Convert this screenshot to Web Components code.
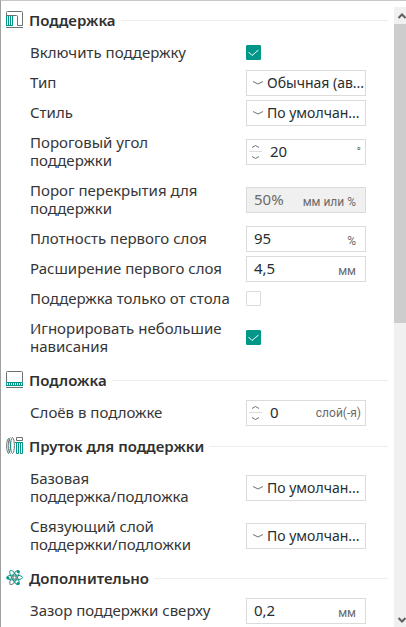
<!DOCTYPE html>
<html lang="ru">

<head>
	<meta charset="UTF-8">
	<meta name="viewport" content="width=device-width, initial-scale=1.0">
	<title>Поддержка</title>
	<style>
		html,
		body {
			height: 100%;
			margin: 0;
		}

		body {
			font: 15px/18px "Noto Sans", "Open Sans", sans-serif;
			color: #363636;
			background: #fff;
			--accent: #009688;
			--line: #dbdbdb;
		}
	</style>
</head>

<body>
	<settings-panel>
		<settings-group name="Поддержка">
			<svg slot="icon" width="18" height="18" viewBox="0 0 18 18" fill="none">
				<path d="M.5 5V1.500Q.5.500 1.500.500H15.500Q16.500.500 16.500 1.500V14.500H11.500V5.500Q11.500 4.500 10.500 4.500H.5M0 16.500H17" stroke="#6b7273" />
				<path d="M.5 5V14.500M2.500 5V14.500M4.500 5V14.500M6.500 5V14.500M0 14.500H7" stroke="#009688" />
			</svg>
			<check-row checked>Включить поддержку</check-row>
			<select-row value="Обычная (ав...">Тип</select-row>
			<select-row value="По умолчан...">Стиль</select-row>
			<number-row value="20" unit="°" spin>Пороговый угол<br>поддержки</number-row>
			<number-row value="50%" unit="мм или %" disabled>Порог перекрытия для<br>поддержки</number-row>
			<number-row value="95" unit="%">Плотность первого слоя</number-row>
			<number-row value="4,5" unit="мм">Расширение первого слоя</number-row>
			<check-row>Поддержка только от стола</check-row>
			<check-row checked>Игнорировать небольшие<br>нависания</check-row>
		</settings-group>
		<settings-group name="Подложка">
			<svg slot="icon" width="18" height="18" viewBox="0 0 18 18" fill="none">
				<path d="M.5 11V1.500Q.5.500 1.500.500H15.500Q16.500.500 16.500 1.500V11M0 16.500H17" stroke="#6b7273" />
				<path d="M.5 14V11.500H16.500V14M0 14.500H17M2.500 12V14M4.500 12V14M6.500 12V14M8.500 12V14M10.500 12V14M12.500 12V14M14.500 12V14" stroke="#009688" />
			</svg>
			<number-row value="0" unit="слой(-я)" spin>Слоёв в подложке</number-row>
		</settings-group>
		<settings-group name="Пруток для поддержки">
			<svg slot="icon" width="18" height="18" viewBox="0 0 18 18" fill="none">
				<path d="M2.500 1.500C0 3 0 14.500 2.500 16.500M4.500.500C1.500 2 1.500 15.500 4.500 16.500M6.500.500C9 2 9 15.500 6.500 16.500C4 15.500 4 2 6.500.500M10.500.500H16.500V3.500H10.500Z" stroke="#6b7273" />
				<path d="M2.500 1.500C5 4 5 14 2.500 16.500M9 5.500H17M10.500 5.500V16.500H12.500V5.500M14.500 5.500V16.500H16.500V5.500" stroke="#009688" />
			</svg>
			<select-row value="По умолчан...">Базовая<br>поддержка/подложка</select-row>
			<select-row value="По умолчан...">Связующий слой<br>поддержки/подложки</select-row>
		</settings-group>
		<settings-group name="Дополнительно">
			<svg slot="icon" width="18" height="18" viewBox="0 0 18 18" fill="none">
				<ellipse cx="8.500" cy="8.500" rx="8" ry="2.500" transform="rotate(-60 8.500 8.500)" stroke="#6b7273" />
				<ellipse cx="8.500" cy="8.500" rx="8" ry="2.500" transform="rotate(60 8.500 8.500)" stroke="#009688" />
				<ellipse cx="8.500" cy="8.500" rx="8" ry="2.500" stroke="#009688" />
				<circle cx="8.500" cy="8.500" r="1.500" fill="#fff" stroke="#6b7273" />
				<circle cx="2" cy="9" r="1.500" fill="#009688" />
				<circle cx="12" cy="2.500" r="1.500" fill="#009688" />
				<circle cx="12" cy="14.500" r="1.500" fill="#009688" />
			</svg>
			<number-row value="0,2" unit="мм">Зазор поддержки сверху</number-row>
		</settings-group>
	</settings-panel>

	<template id="panel">
		<style>
			:host {
				display: flex;
				box-sizing: border-box;
				height: 100%;
				overflow: hidden;
				border-top: 1px solid #c8c8c8;
				border-left: 1px solid #a0a0a0;
			}

			main {
				flex: 1;
				min-width: 0;
				padding: 1px 6px 0 5px;
			}
		</style>
		<main>
			<slot></slot>
		</main>
		<scroll-track></scroll-track>
	</template>

	<template id="track">
		<style>
			:host {
				display: flex;
				flex-direction: column;
				width: 12px;
				margin-top: 6px;
				overflow: hidden;
				background: #f0f0f0;
			}

			button {
				display: block;
				width: 17px;
				height: 17px;
				padding: 0;
				border: 0;
				background: none;
			}

			svg {
				display: block;
			}

			.rail {
				flex: 1;
			}

			.thumb {
				height: 51%;
				background: #cdcdcd;
			}
		</style>
		<button type="button" aria-label="Вверх">
			<svg width="17" height="17" fill="none" stroke="#606060" stroke-width="2">
				<path d="M4.500 11L8 7.500L11.500 11" />
			</svg>
		</button>
		<div class="rail">
			<div class="thumb"></div>
		</div>
		<button type="button" aria-label="Вниз">
			<svg width="17" height="17" fill="none" stroke="#606060" stroke-width="2">
				<path d="M4.500 8L8 11.500L11.500 8" />
			</svg>
		</button>
	</template>

	<template id="group">
		<style>
			:host {
				display: block;
			}

			header {
				display: flex;
				align-items: center;
				height: 36px;
				gap: 5px;
			}

			::slotted(svg) {
				flex: none;
			}

			h2 {
				margin: 0;
				font-size: 15px;
				font-weight: 600;
				color: #303030;
			}

			.rule {
				flex: 1;
				height: 1px;
				background: #eee;
			}
		</style>
		<header>
			<slot name="icon"></slot>
			<h2></h2>
			<div class="rule"></div>
		</header>
		<slot></slot>
	</template>

	<template id="row">
		<style>
			:host {
				display: flex;
				align-items: center;
				gap: 16px;
				padding: 2px 22px 2px 24px;
			}

			label {
				flex: 1;
				padding: 3px 0 5px;
				white-space: nowrap;
			}

			.control {
				display: flex;
				align-items: center;
				box-sizing: border-box;
				width: 120px;
				height: 26px;
			}

			.box {
				border: 1px solid var(--line);
				background: #fff;
				color: #262e30;
			}

			input[type=checkbox] {
				appearance: none;
				box-sizing: border-box;
				width: 15px;
				height: 15px;
				margin: 0;
				border: 1px solid var(--line);
				border-radius: 1px;
			}

			input:checked {
				border-color: var(--accent);
				background: var(--accent);
			}

			.check {
				display: grid;
				padding-bottom: 1px;
			}

			.check > * {
				grid-area: 1 / 1;
			}

			.check svg {
				display: none;
				pointer-events: none;
			}

			:checked + svg {
				display: block;
			}

			.pick {
				display: grid;
				grid-template-columns: 20px 1fr;
			}

			.pick svg {
				grid-area: 1 / 1;
				margin-left: 5px;
				pointer-events: none;
			}

			select {
				grid-area: 1 / 1 / 2 / 3;
				appearance: none;
				width: 100%;
				height: 24px;
				padding: 0 0 0 20px;
				border: 0;
				background: none;
				font: inherit;
				font-size: 14px;
				color: inherit;
			}

			input[type=text] {
				flex: 1;
				min-width: 0;
				height: 24px;
				box-sizing: border-box;
				padding: 0 0 2px 7px;
				border: 0;
				outline: 0;
				background: none;
				font: inherit;
				color: inherit;
			}

			.unit {
				padding: 3px 9px 0 0;
				font-family: Roboto, "Noto Sans", sans-serif;
				font-size: 12px;
				color: #6b6b6b;
			}

			.spin {
				display: none;
				flex-direction: column;
			}

			.spin button {
				display: flex;
				justify-content: center;
				align-items: center;
				height: 10px;
				padding: 0;
				border: 0;
				background: none;
			}

			.spin button:first-child {
				border-bottom: 1px solid var(--line);
			}

			:host([spin]) .spin {
				display: flex;
				width: 13px;
				margin-left: 2px;
			}

			:host([spin]) .unit {
				padding: 0 4px 0 0;
			}

			:host([spin]) input {
				padding-left: 8px;
			}

			:host([disabled]) .box {
				background: #f0f0f0;
				color: #6b6b6b;
			}
		</style>
		<label for="field"><slot></slot></label>
	</template>

	<script>
		const part = (id) => document.getElementById(id).content.cloneNode(true);

		customElements.define("scroll-track", class extends HTMLElement {
			constructor() {
				super();
				this.attachShadow({ mode: "open" }).append(part("track"));
			}
		});

		customElements.define("settings-panel", class extends HTMLElement {
			constructor() {
				super();
				this.attachShadow({ mode: "open" }).append(part("panel"));
			}
		});

		customElements.define("settings-group", class extends HTMLElement {
			constructor() {
				super();
				this.attachShadow({ mode: "open" }).append(part("group"));
				this.shadowRoot.querySelector("h2").textContent = this.getAttribute("name");
			}
		});

		// Shared label column; subclasses supply the control markup.
		class SettingRow extends HTMLElement {
			constructor() {
				super();
				this.attachShadow({ mode: "open" }).append(part("row"));
				const control = document.createElement("div");
				control.className = "control " + this.constructor.kind;
				control.innerHTML = this.constructor.markup;
				this.shadowRoot.append(control);
				this.field = this.shadowRoot.getElementById("field");
				this.fill(control);
			}
		}

		customElements.define("check-row", class extends SettingRow {
			static kind = "";
			static markup = `<div class="check">
				<input id="field" type="checkbox">
				<svg width="15" height="15" fill="none" stroke="#fff"><path d="M2.500 7L6 10.500L12.500 5" /></svg>
			</div>`;
			fill() {
				this.field.checked = this.hasAttribute("checked");
			}
		});

		customElements.define("select-row", class extends SettingRow {
			static kind = "box pick";
			static markup = `<select id="field"></select>
				<svg width="12" height="6" fill="none" stroke="#6b7273"><path d="M1 1.500L6 4L11 1.500" /></svg>`;
			fill() {
				this.field.add(new Option(this.getAttribute("value")));
			}
		});

		customElements.define("number-row", class extends SettingRow {
			static kind = "box";
			static markup = `<div class="spin">
					<button type="button" aria-label="Больше"><svg width="9" height="5" fill="none" stroke="#6b7273"><path d="M1 3.500L4.500 1.500L8 3.500" /></svg></button>
					<button type="button" aria-label="Меньше"><svg width="9" height="5" fill="none" stroke="#6b7273"><path d="M1 1.500L4.500 3.500L8 1.500" /></svg></button>
				</div>
				<input id="field" type="text">
				<span class="unit"></span>`;
			fill(control) {
				this.field.value = this.getAttribute("value");
				this.field.disabled = this.hasAttribute("disabled");
				control.querySelector(".unit").textContent = this.getAttribute("unit");
			}
		});
	</script>
</body>

</html>
